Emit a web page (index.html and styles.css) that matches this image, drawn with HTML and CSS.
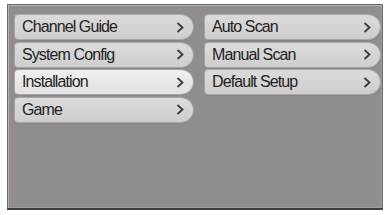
FILE: index.html
```html
<!DOCTYPE html>
<html lang="en">
<head>
  <meta charset="UTF-8" />
  <title>Installation Menu</title>
  <link rel="stylesheet" href="styles.css">
</head>
<body>
  <div class="panel">
    <!-- main menu -->
    <div class="menu menu-main">
      <div class="item"><span>Channel Guide</span><svg class="arrow" viewBox="0 0 8 11"><polyline points="1.5,1 6.5,5.5 1.5,10" /></svg></div>
      <div class="item"><span>System Config</span><svg class="arrow" viewBox="0 0 8 11"><polyline points="1.5,1 6.5,5.5 1.5,10" /></svg></div>
      <div class="item active"><span>Installation</span><svg class="arrow" viewBox="0 0 8 11"><polyline points="1.5,1 6.5,5.5 1.5,10" /></svg></div>
      <div class="item"><span>Game</span><svg class="arrow" viewBox="0 0 8 11"><polyline points="1.5,1 6.5,5.5 1.5,10" /></svg></div>
    </div>

    <!-- sub menu -->
    <div class="menu menu-sub">
      <div class="item"><span>Auto Scan</span><svg class="arrow" viewBox="0 0 8 11"><polyline points="1.5,1 6.5,5.5 1.5,10" /></svg></div>
      <div class="item"><span>Manual Scan</span><svg class="arrow" viewBox="0 0 8 11"><polyline points="1.5,1 6.5,5.5 1.5,10" /></svg></div>
      <div class="item"><span>Default Setup</span><svg class="arrow" viewBox="0 0 8 11"><polyline points="1.5,1 6.5,5.5 1.5,10" /></svg></div>
    </div>
  </div>
</body>
</html>
```

FILE: styles.css
```css
body {
  margin: 0;
  background: #fff;
  font-family: "Liberation Sans", Arial, sans-serif;
}
.panel {
  margin: 4px 0 0 7px;
  width: 376px;
  height: 206px;
  box-sizing: border-box;
  border: 1px solid #6a6a6a;
  border-bottom: 2px solid #3e3e3e;
  box-shadow: inset 1px 1px 0 #b4b2b2, inset -1px -1px 0 #a09d9d;
  background: #918d8e;
  display: flex;
  gap: 12px;
  padding: 10px 0 0 7px;
}
.menu {
  display: flex;
  flex-direction: column;
  gap: 3.5px;
}
.menu-main {
  width: 178px;
}
.menu-sub {
  width: 175px;
}
.item {
  height: 24px;
  display: flex;
  align-items: center;
  justify-content: space-between;
  padding: 0 9px 0 7px;
  border-radius: 3px 12px 12px 3px;
  background: linear-gradient(to bottom, #dcdbdb, #cfcdce);
  box-shadow: 0 0 0 1px #a8a5a6, 0 1px 2px rgba(60, 60, 60, 0.35);
  color: #232323;
  font-size: 16px;
  letter-spacing: -0.9px;
}
.item.active {
  background: linear-gradient(to bottom, #f0efef, #e2e1e1);
}
.arrow {
  width: 8px;
  height: 11px;
  fill: none;
  stroke: #3a3a3a;
  stroke-width: 1.8;
}
```
